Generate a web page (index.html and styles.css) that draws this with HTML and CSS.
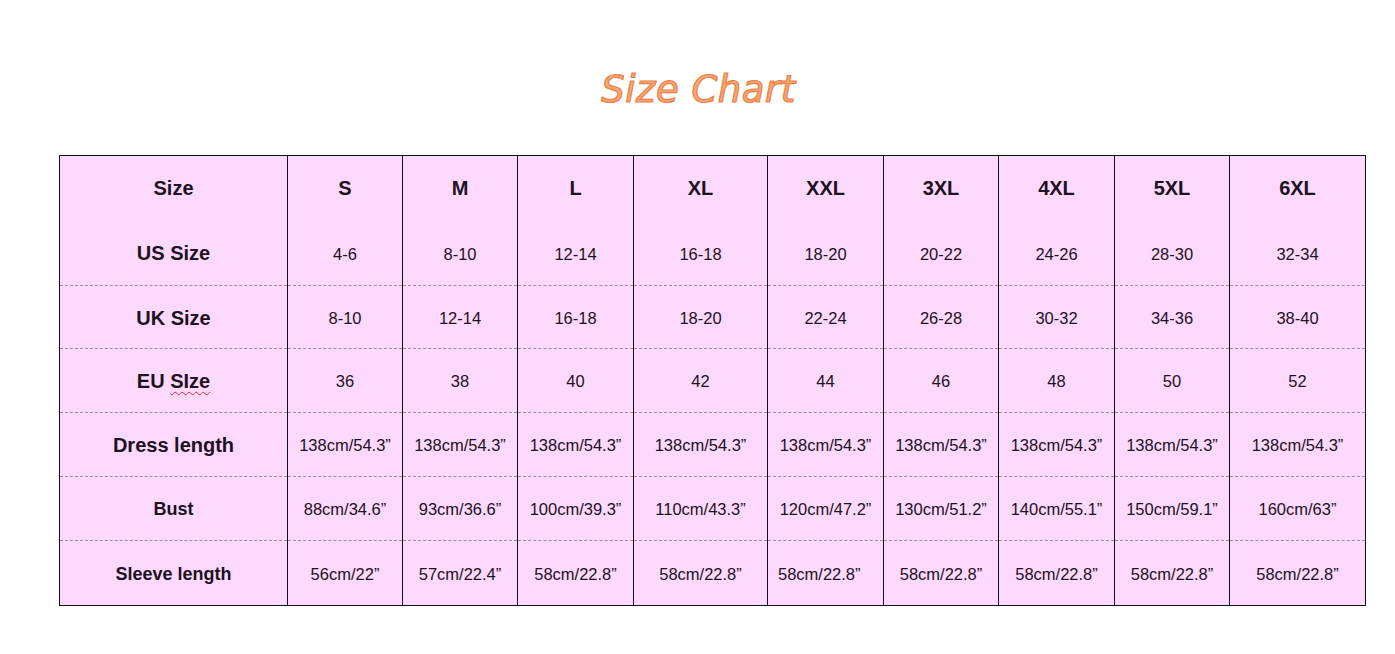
FILE: index.html
```html
<!DOCTYPE html>
<html>
<head>
<meta charset="utf-8">
<link rel="stylesheet" href="styles.css">
</head>
<body>
<div class="page">
  <h1 class="title">Size Chart</h1>
  <table class="chart">
    <colgroup>
      <col style="width:228px"><col style="width:115px"><col style="width:115px"><col style="width:116px"><col style="width:134px"><col style="width:116px"><col style="width:115px"><col style="width:116px"><col style="width:115px"><col style="width:136px">
    </colgroup>
    <tr class="row-head r65">
      <th class="lbl big">Size</th><th>S</th><th>M</th><th>L</th><th>XL</th><th>XXL</th><th>3XL</th><th>4XL</th><th>5XL</th><th>6XL</th>
    </tr>
    <tr class="r65 nodash low">
      <th class="lbl big">US Size</th><td>4-6</td><td>8-10</td><td>12-14</td><td>16-18</td><td>18-20</td><td>20-22</td><td>24-26</td><td>28-30</td><td>32-34</td>
    </tr>
    <tr class="r63">
      <th class="lbl big">UK Size</th><td>8-10</td><td>12-14</td><td>16-18</td><td>18-20</td><td>22-24</td><td>26-28</td><td>30-32</td><td>34-36</td><td>38-40</td>
    </tr>
    <tr class="r64">
      <th class="lbl big">EU <span class="typo">SIze</span></th><td>36</td><td>38</td><td>40</td><td>42</td><td>44</td><td>46</td><td>48</td><td>50</td><td>52</td>
    </tr>
    <tr class="r64">
      <th class="lbl big">Dress length</th><td>138cm/54.3”</td><td>138cm/54.3”</td><td>138cm/54.3”</td><td>138cm/54.3”</td><td>138cm/54.3”</td><td>138cm/54.3”</td><td>138cm/54.3”</td><td>138cm/54.3”</td><td>138cm/54.3”</td>
    </tr>
    <tr class="r64">
      <th class="lbl small">Bust</th><td>88cm/34.6”</td><td>93cm/36.6”</td><td>100cm/39.3”</td><td>110cm/43.3”</td><td>120cm/47.2”</td><td>130cm/51.2”</td><td>140cm/55.1”</td><td>150cm/59.1”</td><td>160cm/63”</td>
    </tr>
    <tr class="r65">
      <th class="lbl small">Sleeve length</th><td>56cm/22”</td><td>57cm/22.4”</td><td>58cm/22.8”</td><td>58cm/22.8”</td><td class="shift">58cm/22.8”</td><td>58cm/22.8”</td><td>58cm/22.8”</td><td>58cm/22.8”</td><td>58cm/22.8”</td>
    </tr>
  </table>
</div>
</body>
</html>
```
FILE: styles.css
```css
html, body {
  margin: 0;
  padding: 0;
  background: #ffffff;
}
.page {
  width: 1395px;
  padding-top: 68px;
}
.title {
  margin: 0 0 43px 0;
  height: 44px;
  line-height: 44px;
  text-align: center;
  font-family: "DejaVu Sans", "Liberation Sans", sans-serif;
  font-weight: normal;
  font-style: italic;
  font-size: 37px;
  letter-spacing: 0.5px;
  color: #f6a878;
  -webkit-text-stroke: 1.2px #ec7f43;
  padding-left: 2px;
}
.chart {
  margin-left: 59px;
  width: 1306px;
  table-layout: fixed;
  border-collapse: collapse;
  background: #fed9ff;
  border: 1px solid #111;
  font-family: "Liberation Sans", Arial, sans-serif;
  color: #1c1220;
}
.chart th, .chart td {
  text-align: center;
  vertical-align: middle;
  padding: 2px 0 0 0;
  border-left: 1px solid #111;
  border-right: 1px solid #111;
  border-top: 1px dashed #9a8f9c;
}
.chart th {
  font-weight: bold;
  font-size: 20px;
}
.chart td {
  font-size: 16.5px;
}
.chart .lbl.big {
  font-size: 20px;
}
.chart .lbl.small {
  font-size: 18px;
}
.row-head th {
  border-top: 1px solid #111;
  padding-top: 0;
}
.nodash th, .nodash td {
  border-top: none;
}
.low td {
  padding-top: 4px;
}
.r65 { height: 65px; }
.r63 { height: 63px; }
.r64 { height: 64px; }
.typo {
  text-decoration: underline wavy #e03030;
  text-decoration-thickness: 1px;
  text-underline-offset: 3px;
}
.chart td.shift {
  padding-left: 10px;
  text-align: left;
}
```
